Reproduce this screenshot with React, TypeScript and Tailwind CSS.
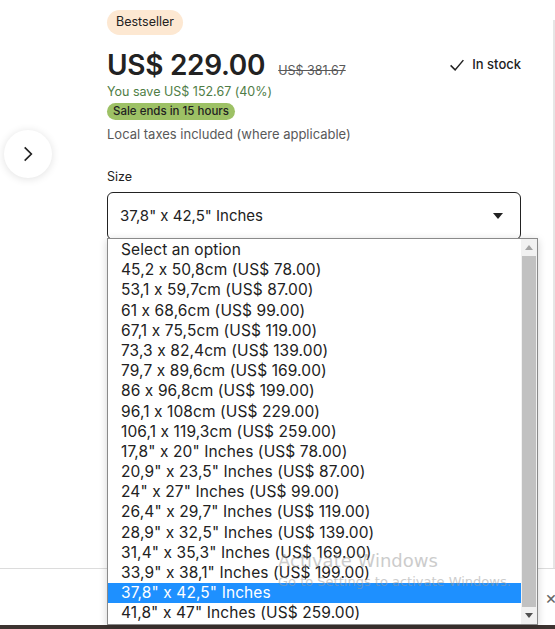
import React from 'react';

const options = [
  'Select an option',
  '45,2 x 50,8cm (US$ 78.00)',
  '53,1 x 59,7cm (US$ 87.00)',
  '61 x 68,6cm (US$ 99.00)',
  '67,1 x 75,5cm (US$ 119.00)',
  '73,3 x 82,4cm (US$ 139.00)',
  '79,7 x 89,6cm (US$ 169.00)',
  '86 x 96,8cm (US$ 199.00)',
  '96,1 x 108cm (US$ 229.00)',
  '106,1 x 119,3cm (US$ 259.00)',
  '17,8" x 20" Inches (US$ 78.00)',
  '20,9" x 23,5" Inches (US$ 87.00)',
  '24" x 27" Inches (US$ 99.00)',
  '26,4" x 29,7" Inches (US$ 119.00)',
  '28,9" x 32,5" Inches (US$ 139.00)',
  '31,4" x 35,3" Inches (US$ 169.00)',
  '33,9" x 38,1" Inches (US$ 199.00)',
  '37,8" x 42,5" Inches',
  '41,8" x 47" Inches (US$ 259.00)',
];

const selected = '37,8" x 42,5" Inches';

const App = () => {
  return (
    <div className="relative flex h-[629px] w-[555px] flex-col overflow-hidden bg-white font-['Inter',sans-serif] text-[#222] [font-feature-settings:'calt'_0]">
      {/* Main listing area */}
      <div className="flex flex-1">
        {/* Carousel arrow column */}
        <div className="w-[107px] shrink-0">
          <button className="ml-[4px] mt-[130px] flex h-[48px] w-[48px] items-center justify-center rounded-full bg-white shadow-[0_1px_8px_rgba(0,0,0,0.12)]">
            <svg width="20" height="20" viewBox="0 0 24 24" fill="none" stroke="#222" strokeWidth="2">
              <path d="M8 4l8 8-8 8" />
            </svg>
          </button>
        </div>

        {/* Buy box */}
        <div className="w-[414px] shrink-0 pt-[10px]">
          <div className="flex h-[25px] w-fit items-center rounded-full bg-[#fde8d2] px-[9px] text-[12.5px]">
            Bestseller
          </div>

          <div className="mt-[13px] flex items-center justify-between">
            <div className="flex items-baseline gap-[13px]">
              <span className="text-[28px] font-semibold leading-[34px] tracking-[-0.3px]">US$ 229.00</span>
              <span className="text-[12.5px] text-[#595959] line-through">US$ 381.67</span>
            </div>
            <div className="flex items-center gap-[6px] text-[13px] font-medium">
              <svg width="18" height="18" viewBox="0 0 24 24" fill="none" stroke="#222" strokeWidth="2">
                <path d="M3.5 12.5l6 6 11-13" />
              </svg>
              In stock
            </div>
          </div>

          <div className="mt-[1px] text-[12.5px] leading-[18px] text-[#4f7d46]">You save US$ 152.67 (40%)</div>
          <div className="mt-[2px] flex h-[17px] w-fit items-center rounded-full bg-[#9dc165] px-[6px] text-[11.5px] font-medium">
            Sale ends in 15 hours
          </div>
          <div className="mt-[5px] text-[13px] leading-[18px] text-[#595959]">Local taxes included (where applicable)</div>

          <div className="mt-[25px] text-[12.5px] leading-[18px]">Size</div>

          <div className="relative mt-[6px]">
            <div className="flex h-[48px] items-center justify-between rounded-[6px] border border-[#222] pl-[12px] pr-[16px] text-[15px]">
              <span>{selected}</span>
              <svg width="12" height="8" viewBox="0 0 12 8">
                <path d="M1 1h10L6 7z" fill="#222" />
              </svg>
            </div>

            {/* Native dropdown list */}
            <div className="absolute left-0 top-[46px] z-10 flex h-[387px] w-[431px] border border-[#8a8a8a] bg-white shadow-[0_2px_8px_rgba(0,0,0,0.18)]">
              <ul className="flex-1 pt-[1px]">
                {options.map((o) => (
                  <li
                    key={o}
                    className={`h-[20.2px] pl-[13px] text-[15.5px] leading-[20px] tracking-[0.1px] ${
                      o === selected ? 'bg-[#1e90ff] text-white' : 'text-[#222]'
                    }`}
                  >
                    {o}
                  </li>
                ))}
              </ul>
              <div className="flex w-[16px] flex-col bg-[#f1f1f1]">
                <div className="flex h-[17px] items-center justify-center">
                  <svg width="8" height="5" viewBox="0 0 8 5">
                    <path d="M0 5L4 0l4 5z" fill="#a3a3a3" />
                  </svg>
                </div>
                <div className="mx-[1px] flex-1 bg-[#c1c1c1]" />
                <div className="flex h-[17px] items-center justify-center">
                  <svg width="8" height="5" viewBox="0 0 8 5">
                    <path d="M0 0h8L4 5z" fill="#505050" />
                  </svg>
                </div>
              </div>
            </div>
          </div>
        </div>

        <div className="flex-1" />
        <div className="mt-[20px] h-[548px] w-[2px] bg-[#e6e6e6]" />
      </div>

      {/* Sticky bottom bar */}
      <div className="flex h-[57px] items-center justify-end border-t border-[#dcdcdc] bg-white">
        <span className="mr-[-2px] text-[18px] text-[#666]">×</span>
      </div>
      <div className="h-[4px] bg-[#3d3330]" />

      {/* OS watermark */}
      <div className="pointer-events-none absolute left-[278px] top-[550px] z-20 font-['DejaVu_Sans',sans-serif] text-[#9a9a9a] opacity-50">
        <div className="text-[18px] leading-[22px]">Activate Windows</div>
        <div className="mt-[2px] text-[13px] leading-[16px]">Go to Settings to activate Windows.</div>
      </div>
    </div>
  );
};

export default App;
